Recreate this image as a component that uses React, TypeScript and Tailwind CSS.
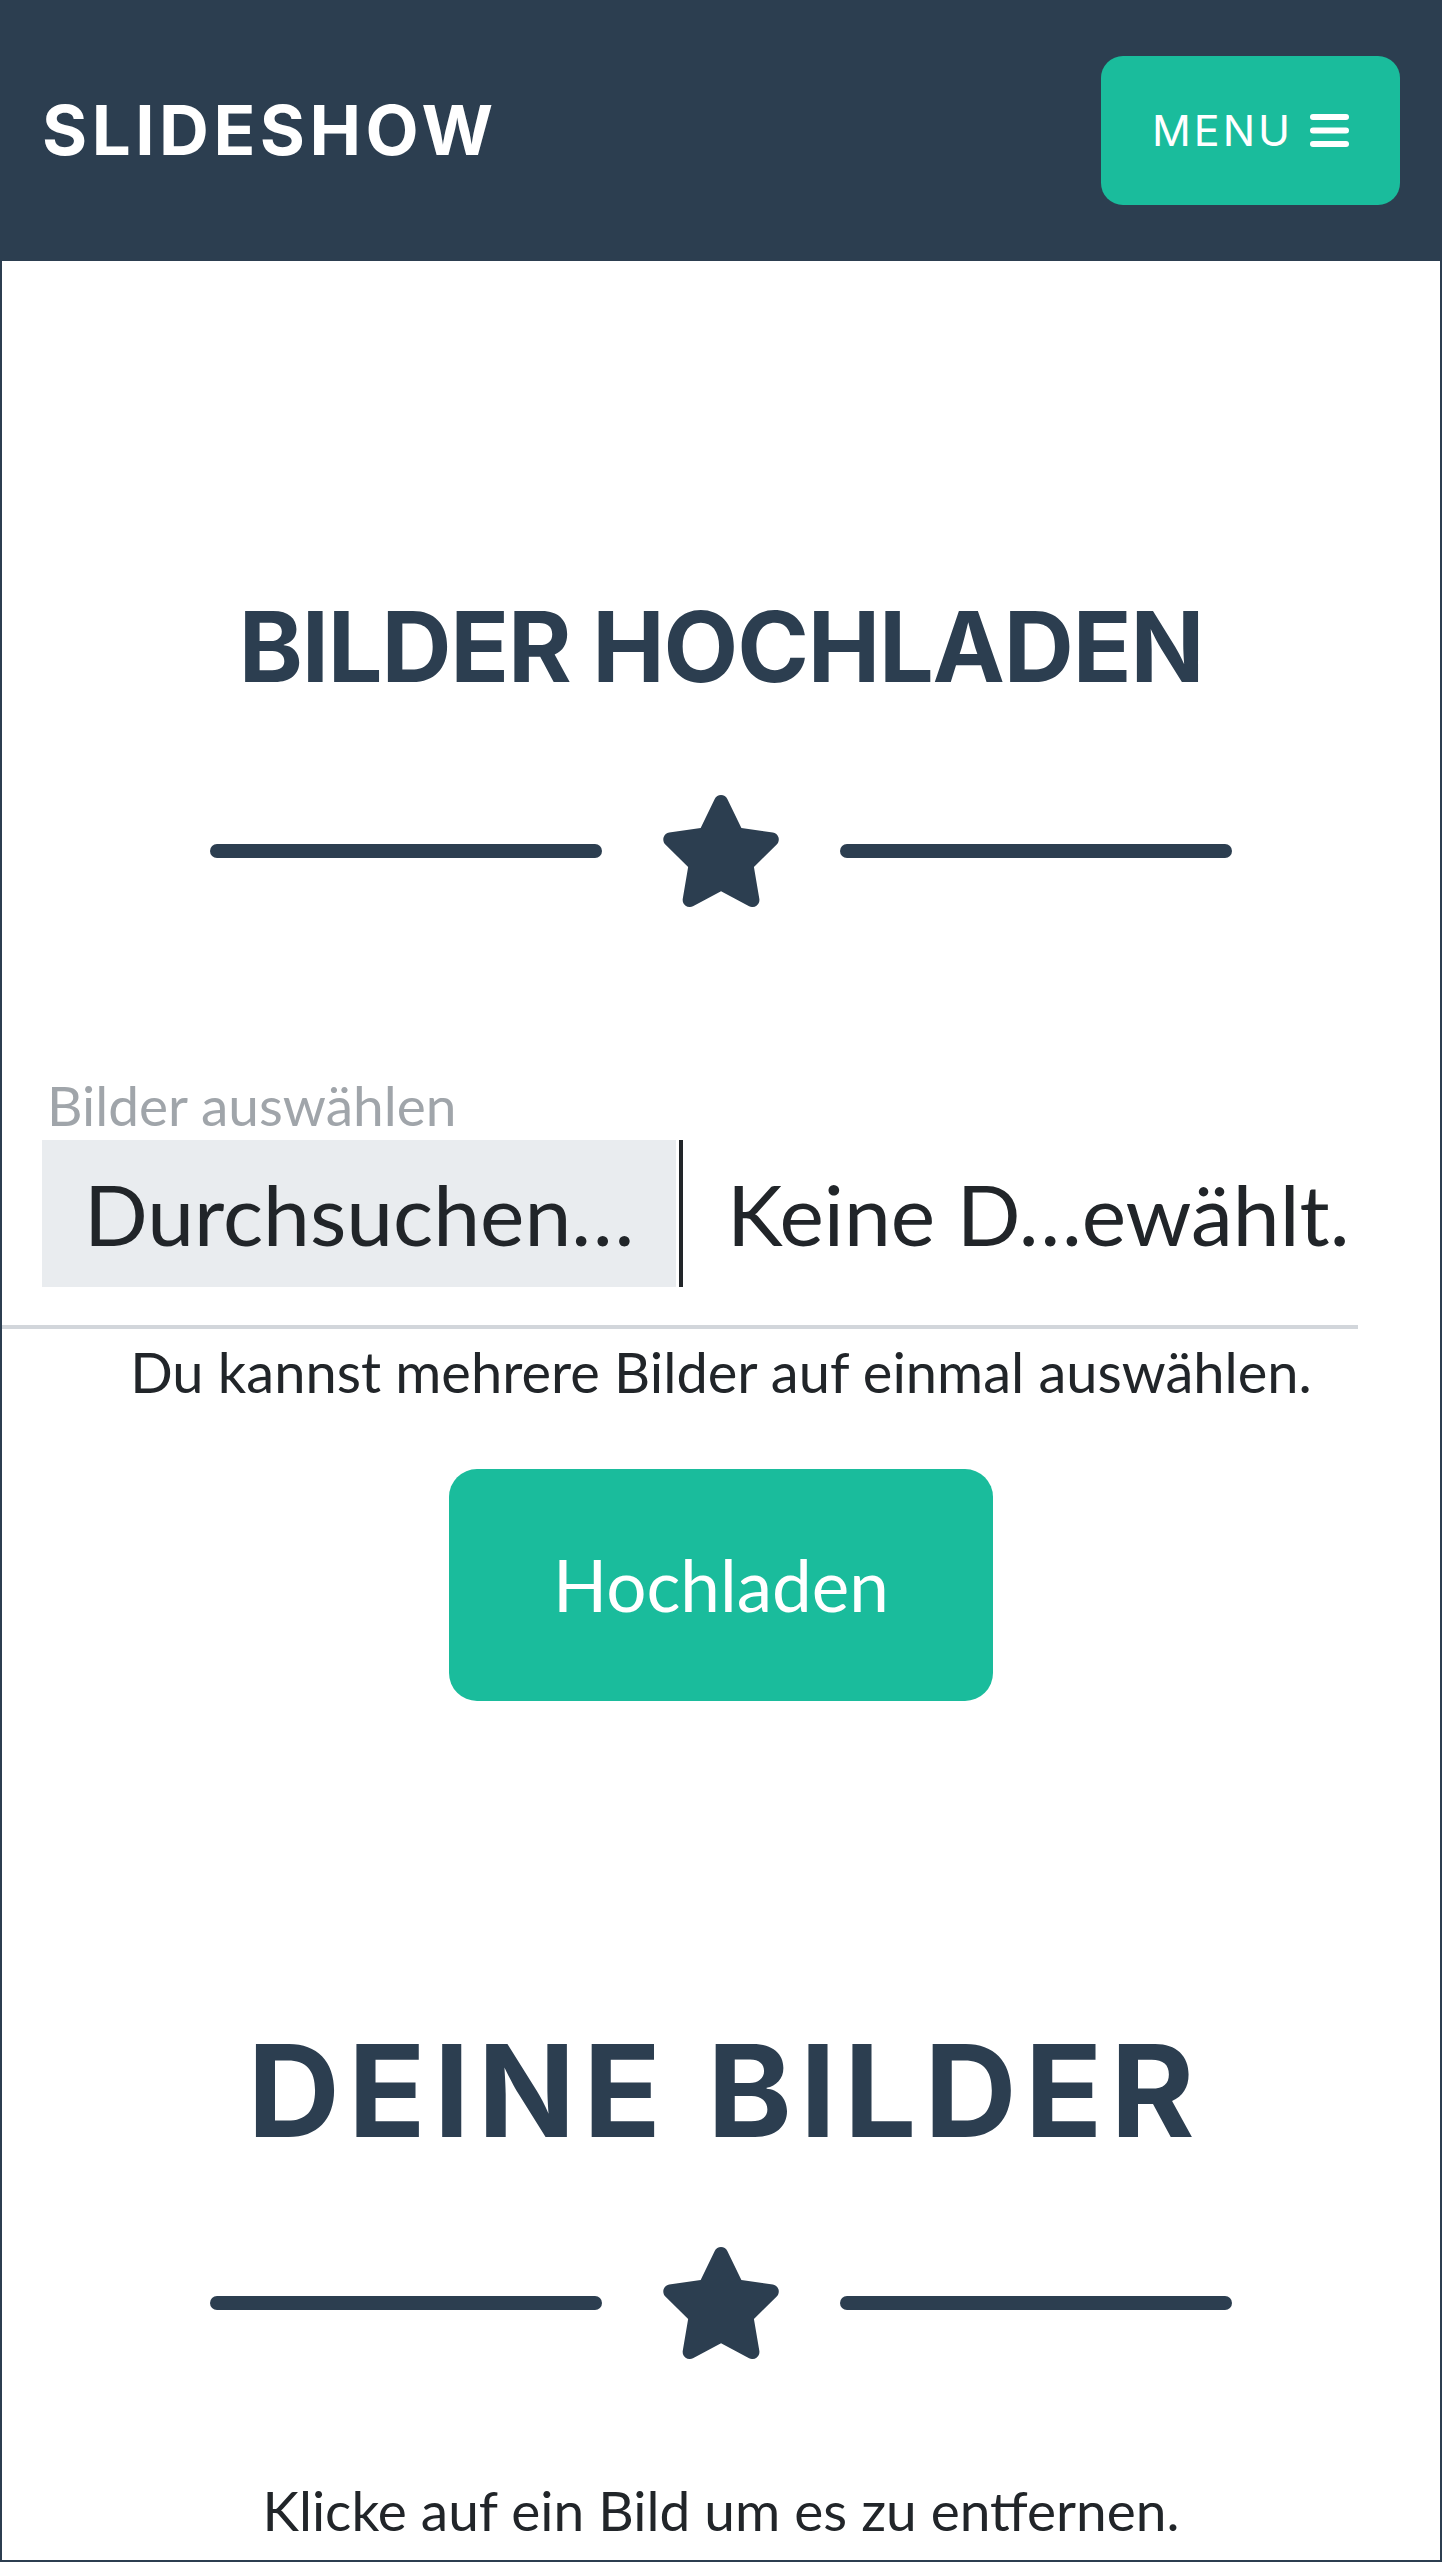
const Star = () => (
  <svg viewBox="0 0 576 512" className="h-[112px] w-[126px] fill-[#2c3e50]">
    <path d="M316.9 18C311.6 7 300.4 0 288.1 0s-23.4 7-28.8 18L195 150.3 51.4 171.5c-12 1.8-22 10.2-25.7 21.7s-.7 24.2 7.9 32.7L137.8 329 113.2 474.7c-2 12 3 24.2 12.9 31.3s23 8 33.8 2.3l128.3-68.5 128.3 68.5c10.8 5.7 23.9 4.9 33.8-2.3s14.9-19.3 12.9-31.3L438.5 329 542.7 225.9c8.6-8.5 11.7-21.2 7.9-32.7s-13.7-19.9-25.7-21.7L381.2 150.3 316.9 18z" />
  </svg>
);

const Divider = () => (
  <div className="flex h-[116px] items-center justify-center">
    <div className="h-[14px] w-[392px] rounded-full bg-[#2c3e50]" />
    <div className="mx-[56px]">
      <Star />
    </div>
    <div className="h-[14px] w-[392px] rounded-full bg-[#2c3e50]" />
  </div>
);

const Bars = () => (
  <svg viewBox="0 0 39 33" className="h-[33px] w-[39px] fill-white">
    <rect x="0" y="0" width="39" height="6" rx="3" />
    <rect x="0" y="13.5" width="39" height="6" rx="3" />
    <rect x="0" y="27" width="39" height="6" rx="3" />
  </svg>
);

export default function App() {
  return (
    <div className="w-[1442px] h-[2562px] overflow-hidden bg-white font-['Lato',sans-serif]">
      {/* navbar */}
      <nav className="flex h-[261px] items-center justify-between bg-[#2c3e50] pl-[42px] pr-[42px]">
        <a className="font-['Inter',sans-serif] text-[69px] font-bold leading-none tracking-[4.5px] text-white">
          SLIDESHOW
        </a>
        <button className="flex h-[149px] w-[299px] items-center justify-center gap-[17px] rounded-[22px] bg-[#1abc9c] text-white">
          <span className="font-['Inter',sans-serif] text-[43px] font-normal leading-none tracking-[3px]">
            MENU
          </span>
          <Bars />
        </button>
      </nav>

      <div className="h-[2301px] border-x-2 border-b-2 border-[#2c3e50]">
        {/* upload section */}
        <section className="pt-[336px]">
          <h2 className="h-[100px] text-center font-['Inter',sans-serif] text-[97px] font-bold leading-[100px] tracking-[-1.2px] text-[#2c3e50]">
            BILDER HOCHLADEN
          </h2>
          <div className="mt-[96px]">
            <Divider />
          </div>

          <form className="mt-[166px]">
            <div className="w-[1356px] border-b-4 border-[#d2d6db] pb-[38px] pl-[40px]">
              <label className="block h-[60px] pl-[5px] text-[55px] leading-[60px] text-[#a0a5aa]">
                Bilder auswählen
              </label>
              <div className="mt-[5px] flex h-[147px] items-stretch">
                <div className="flex w-[634px] items-center bg-[#e9ecef] pl-[42px] text-[84px] text-[#212529]">
                  Durchsuchen…
                </div>
                <div className="ml-[3px] w-[4px] bg-[#212529]" />
                <div className="flex items-center pl-[44px] text-[84px] text-[#212529]">
                  Keine D…ewählt.
                </div>
              </div>
            </div>
            <p className="mt-[13px] h-[60px] text-center text-[56px] leading-[60px] text-[#212529]">
              Du kannst mehrere Bilder auf einmal auswählen.
            </p>
            <div className="mt-[67px] flex justify-center">
              <button
                type="button"
                className="flex h-[232px] w-[544px] items-center justify-center rounded-[28px] bg-[#1abc9c] text-[71px] text-white"
              >
                Hochladen
              </button>
            </div>
          </form>
        </section>

        {/* gallery section */}
        <section className="pt-[325px]">
          <h2 className="h-[130px] pl-[8px] text-center font-['Inter',sans-serif] text-[128px] font-bold leading-[130px] tracking-[8px] text-[#2c3e50]">
            DEINE BILDER
          </h2>
          <div className="mt-[89px]">
            <Divider />
          </div>
          <p className="mt-[119px] h-[60px] text-center text-[55px] leading-[60px] text-[#212529]">
            Klicke auf ein Bild um es zu entfernen.
          </p>
        </section>
      </div>
    </div>
  );
}
